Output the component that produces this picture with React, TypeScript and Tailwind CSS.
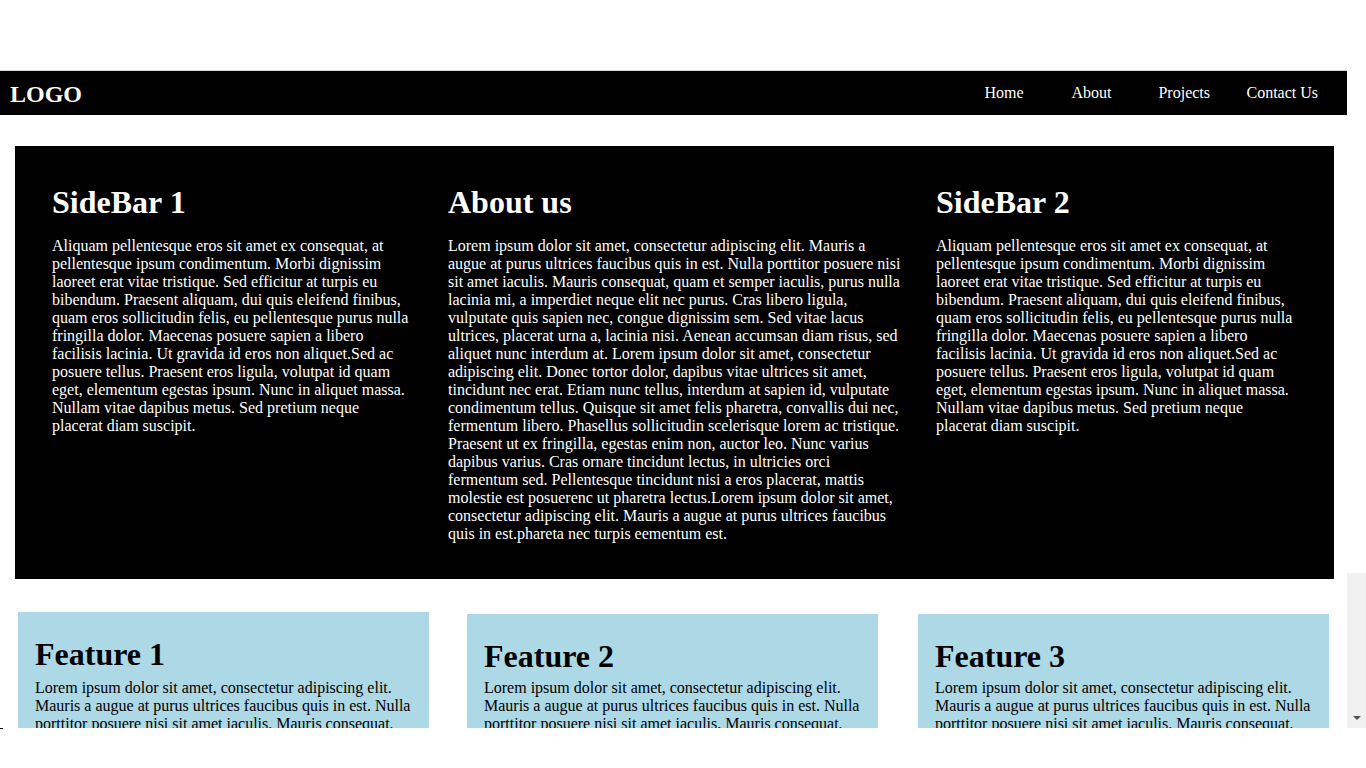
import React from "react";

const side =
  "Aliquam pellentesque eros sit amet ex consequat, at pellentesque ipsum condimentum. Morbi dignissim laoreet erat vitae tristique. Sed efficitur at turpis eu bibendum. Praesent aliquam, dui quis eleifend finibus, quam eros sollicitudin felis, eu pellentesque purus nulla fringilla dolor. Maecenas posuere sapien a libero facilisis lacinia. Ut gravida id eros non aliquet.Sed ac posuere tellus. Praesent eros ligula, volutpat id quam eget, elementum egestas ipsum. Nunc in aliquet massa. Nullam vitae dapibus metus. Sed pretium neque placerat diam suscipit.";

const about =
  "Lorem ipsum dolor sit amet, consectetur adipiscing elit. Mauris a augue at purus ultrices faucibus quis in est. Nulla porttitor posuere nisi sit amet iaculis. Mauris consequat, quam et semper iaculis, purus nulla lacinia mi, a imperdiet neque elit nec purus. Cras libero ligula, vulputate quis sapien nec, congue dignissim sem. Sed vitae lacus ultrices, placerat urna a, lacinia nisi. Aenean accumsan diam risus, sed aliquet nunc interdum at. Lorem ipsum dolor sit amet, consectetur adipiscing elit. Donec tortor dolor, dapibus vitae ultrices sit amet, tincidunt nec erat. Etiam nunc tellus, interdum at sapien id, vulputate condimentum tellus. Quisque sit amet felis pharetra, convallis dui nec, fermentum libero. Phasellus sollicitudin scelerisque lorem ac tristique. Praesent ut ex fringilla, egestas enim non, auctor leo. Nunc varius dapibus varius. Cras ornare tincidunt lectus, in ultricies orci fermentum sed. Pellentesque tincidunt nisi a eros placerat, mattis molestie est posuerenc ut pharetra lectus.Lorem ipsum dolor sit amet, consectetur adipiscing elit. Mauris a augue at purus ultrices faucibus quis in est.phareta nec turpis eementum est.";

const feat =
  "Lorem ipsum dolor sit amet, consectetur adipiscing elit. Mauris a augue at purus ultrices faucibus quis in est. Nulla porttitor posuere nisi sit amet iaculis. Mauris consequat, quam et semper iaculis, purus nulla lacinia mi, a imperdiet neque elit nec purus.";

function Col({ title, text, cls }: { title: string; text: string; cls: string }) {
  return (
    <div className={cls}>
      <h1 className="text-[32px] font-bold leading-[37px]">{title}</h1>
      <p className="mt-[16px] text-[16px] leading-[18px]">{text}</p>
    </div>
  );
}

function Feature({ title, cls, gap }: { title: string; cls: string; gap: string }) {
  return (
    <div className={`w-[411px] h-[200px] bg-[#add8e6] px-[17px] text-black ${cls}`}>
      <h2 className="pt-[24px] text-[32px] font-bold leading-[37px]">{title}</h2>
      <p className={`text-[16px] leading-[18px] ${gap}`}>{feat}</p>
    </div>
  );
}

export default function App() {
  return (
    <div
      className="h-[768px] w-[1366px] bg-white text-black overflow-hidden"
      style={{ fontFamily: '"Liberation Serif", "Times New Roman", serif' }}
    >
      <div className="h-[70px]" />
      <div className="flex h-[658px]">
        <div className="w-[1347px] overflow-hidden">
          <header className="flex h-[45px] items-center bg-black text-white border-t border-[#d4d4d4]">
            <div className="pl-[10px] pt-[2px] text-[24px] font-bold leading-none">LOGO</div>
            <nav className="ml-auto flex items-center pr-[29px] text-[16px]">
              <a className="w-[87px]">Home</a>
              <a className="w-[87px]">About</a>
              <a className="w-[88px]">Projects</a>
              <a>Contact Us</a>
            </nav>
          </header>
          <section className="mt-[31px] ml-[15px] w-[1319px] bg-black text-white pt-[38px] pb-[36px] px-[37px] flex items-start">
            <Col title="SideBar 1" text={side} cls="w-[360px] shrink-0" />
            <Col title="About us" text={about} cls="ml-[36px] w-[455px] shrink-0" />
            <Col title="SideBar 2" text={side} cls="ml-[33px] w-[361px] shrink-0" />
          </section>
          <div className="flex items-start">
            <Feature title="Feature 1" cls="ml-[18px] mt-[33px]" gap="mt-[6px]" />
            <Feature title="Feature 2" cls="ml-[38px] mt-[35px]" gap="mt-[4px]" />
            <Feature title="Feature 3" cls="ml-[40px] mt-[35px]" gap="mt-[4px]" />
          </div>
        </div>
        <div className="flex w-[19px] flex-col justify-end">
          <div className="flex h-[155px] flex-col items-center justify-end bg-[#f0f0f0] pb-[8px]">
            <div className="h-0 w-0 border-x-[4px] border-t-[4px] border-x-transparent border-t-[#505050]" />
          </div>
        </div>
      </div>
      <div className="h-[1px] w-[3px] bg-black" />
    </div>
  );
}
